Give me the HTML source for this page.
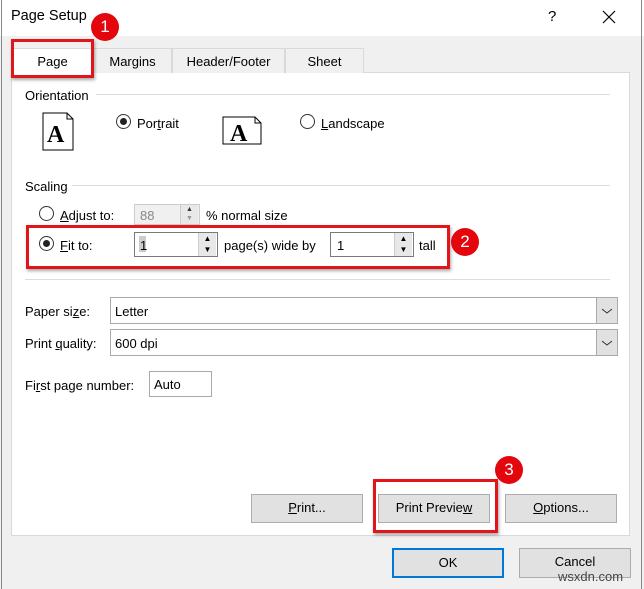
<!DOCTYPE html>
<html><head><style>
*{box-sizing:border-box;margin:0;padding:0}
body{width:644px;height:589px;background:#f0f0f0;font-family:"Liberation Sans",sans-serif;font-size:13px;color:#000;position:relative;overflow:hidden}
.a{position:absolute}
u{text-decoration:underline}
.btn{position:absolute;background:#e1e1e1;border:1px solid #adadad;text-align:center;line-height:26px;font-size:13px}
.inp{position:absolute;background:#fff;border:1px solid #7a7a7a}
.radio{position:absolute;width:15px;height:15px;border:1px solid #333;border-radius:50%;background:#fff}
.radio.on::after{content:"";position:absolute;left:3px;top:3px;width:7px;height:7px;border-radius:50%;background:#222}
.red{position:absolute;border:3px solid #e0161b;box-shadow:1px 2px 3px rgba(0,0,0,.35)}
.badge{position:absolute;width:28px;height:28px;border-radius:50%;background:#e3060d;color:#fff;font-size:17px;text-align:center;line-height:28px}
.spin{position:absolute;width:18px;background:#e8e8e8;border-left:1px solid #ccc}
.tab{position:absolute;top:48px;height:25px;border:1px solid #d9d9d9;border-bottom:none;background:#f0f0f0;text-align:center;line-height:25px}
</style></head><body>
<div class="a" style="left:0;top:0;width:644px;height:36px;background:#fff"></div>
<div class="a" style="left:1px;top:0;width:1px;height:589px;background:#888"></div>
<div class="a" style="left:641px;top:0;width:1px;height:589px;background:#888"></div>
<div class="a" style="left:11px;top:8px;font-size:14.5px">Page Setup</div>
<div class="a" style="left:548px;top:8px;font-size:15px">?</div>
<svg class="a" style="left:602px;top:10px" width="14" height="14"><path d="M1 1L13 13M13 1L1 13" stroke="#000" stroke-width="1.2"/></svg>

<div class="a" style="left:11px;top:72px;width:619px;height:464px;background:#fff;border:1px solid #d9d9d9"></div>
<div class="tab" style="left:12px;width:81px;background:#fff;height:26px">Page</div>
<div class="tab" style="left:93px;width:79px">Margins</div>
<div class="tab" style="left:172px;width:113px">Header/Footer</div>
<div class="tab" style="left:285px;width:79px">Sheet</div>
<div class="red" style="left:11px;top:39px;width:83px;height:39px"></div>
<div class="badge" style="left:91px;top:13px">1</div>

<div class="a" style="left:25px;top:88px">Orientation</div>
<div class="a" style="left:96px;top:94px;width:514px;height:1px;background:#ddd"></div>
<svg class="a" style="left:42px;top:112px" width="32" height="39"><path d="M1 1H25L31 7V38H1Z" fill="#fff" stroke="#000"/><path d="M25 1V7H31" fill="none" stroke="#000"/><text x="5" y="30" font-family="Liberation Serif" font-weight="bold" font-size="24">A</text></svg>
<div class="radio on" style="left:116px;top:114px"></div>
<div class="a" style="left:137px;top:116px">Por<u>t</u>rait</div>
<svg class="a" style="left:222px;top:116px" width="40" height="29"><path d="M1 1H33L39 7V28H1Z" fill="#fff" stroke="#000"/><path d="M33 1V7H39" fill="none" stroke="#000"/><text x="8" y="25" font-family="Liberation Serif" font-weight="bold" font-size="24">A</text></svg>
<div class="radio" style="left:300px;top:114px"></div>
<div class="a" style="left:321px;top:116px"><u>L</u>andscape</div>

<div class="a" style="left:25px;top:179px">Scaling</div>
<div class="a" style="left:72px;top:185px;width:538px;height:1px;background:#ddd"></div>
<div class="radio" style="left:39px;top:206px"></div>
<div class="a" style="left:60px;top:208px"><u>A</u>djust to:</div>
<div class="inp" style="left:134px;top:204px;width:66px;height:21px;border-color:#ccc;background:#f0f0f0"></div>
<div class="a" style="left:140px;top:208px;color:#888">88</div>
<div class="spin" style="left:180px;top:205px;height:19px;font-size:7px;line-height:9px;text-align:center;color:#333">▲<br><span style="color:#999">▼</span></div>
<div class="a" style="left:206px;top:208px">% normal size</div>

<div class="radio on" style="left:39px;top:236px"></div>
<div class="a" style="left:60px;top:238px"><u>F</u>it to:</div>
<div class="inp" style="left:134px;top:232px;width:84px;height:25px"></div>
<div class="a" style="left:139px;top:236px;background:#ccc;width:7px;height:16px"></div>
<div class="a" style="left:140px;top:238px">1</div>
<div class="spin" style="left:198px;top:233px;height:23px;font-size:8px;line-height:11px;text-align:center">▲<br>▼</div>
<div class="a" style="left:224px;top:238px">page(s) wide by</div>
<div class="inp" style="left:330px;top:232px;width:84px;height:25px"></div>
<div class="a" style="left:337px;top:238px">1</div>
<div class="spin" style="left:394px;top:233px;height:23px;font-size:8px;line-height:11px;text-align:center">▲<br>▼</div>
<div class="a" style="left:419px;top:238px">tall</div>
<div class="red" style="left:26px;top:225px;width:424px;height:44px"></div>
<div class="badge" style="left:451px;top:228px">2</div>

<div class="a" style="left:25px;top:279px;width:585px;height:1px;background:#ddd"></div>
<div class="a" style="left:25px;top:304px">Paper si<u>z</u>e:</div>
<div class="inp" style="left:110px;top:297px;width:508px;height:27px;border-color:#aaa"></div>
<div class="a" style="left:115px;top:304px">Letter</div>
<div class="a" style="left:596px;top:297px;width:22px;height:27px;background:#e1e1e1;border:1px solid #aaa"></div>
<svg class="a" style="left:601px;top:307px" width="12" height="8"><path d="M1 2L6 6L11 2" fill="none" stroke="#333"/></svg>
<div class="a" style="left:25px;top:336px">Print <u>q</u>uality:</div>
<div class="inp" style="left:110px;top:329px;width:508px;height:27px;border-color:#aaa"></div>
<div class="a" style="left:115px;top:336px">600 dpi</div>
<div class="a" style="left:596px;top:329px;width:22px;height:27px;background:#e1e1e1;border:1px solid #aaa"></div>
<svg class="a" style="left:601px;top:339px" width="12" height="8"><path d="M1 2L6 6L11 2" fill="none" stroke="#333"/></svg>
<div class="a" style="left:25px;top:378px">Fi<u>r</u>st page number:</div>
<div class="inp" style="left:149px;top:371px;width:63px;height:26px;border-color:#aaa"></div>
<div class="a" style="left:154px;top:377px">Auto</div>

<div class="btn" style="left:251px;top:494px;width:112px;height:29px"><u>P</u>rint...</div>
<div class="btn" style="left:378px;top:494px;width:112px;height:29px">Print Previe<u>w</u></div>
<div class="btn" style="left:505px;top:494px;width:112px;height:29px"><u>O</u>ptions...</div>
<div class="red" style="left:373px;top:479px;width:125px;height:54px"></div>
<div class="badge" style="left:495px;top:456px">3</div>

<div class="btn" style="left:392px;top:548px;width:112px;height:30px;border:2px solid #0078d7;line-height:26px">OK</div>
<div class="btn" style="left:519px;top:548px;width:112px;height:30px">Cancel</div>
<div class="a" style="left:558px;top:569px;font-size:13px;color:#444">wsxdn.com</div>
</body></html>
